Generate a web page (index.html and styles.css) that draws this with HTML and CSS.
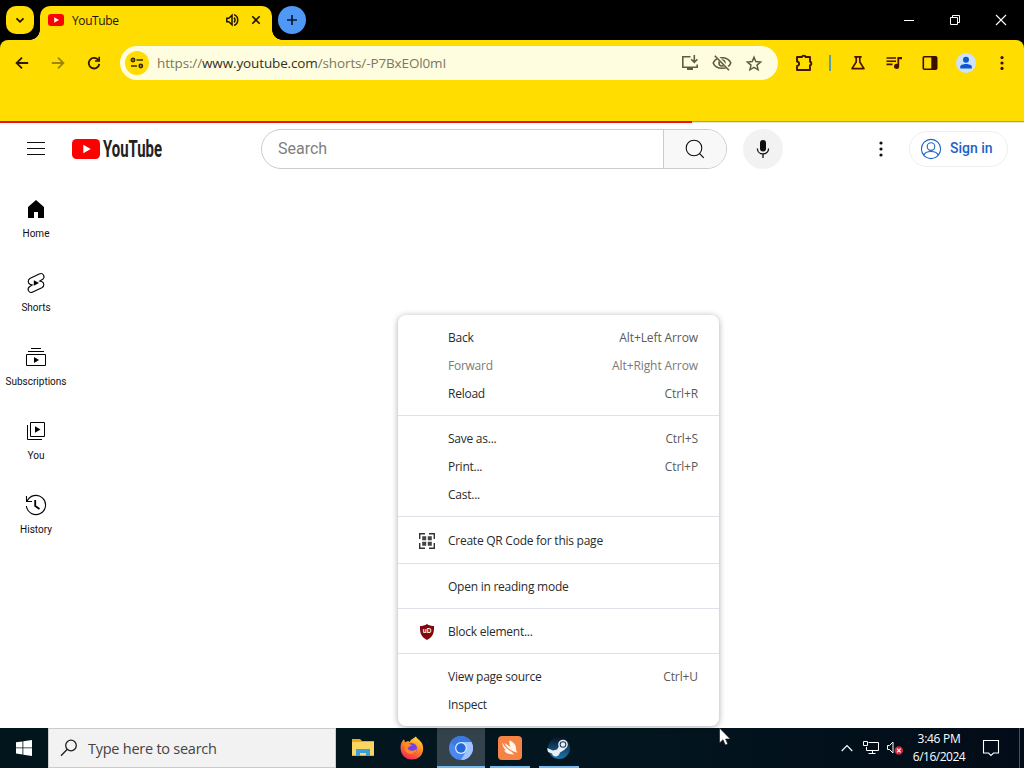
FILE: index.html
```
<!DOCTYPE html>
<html lang="en">
<head>
    <meta charset="UTF-8">
    <meta name="viewport" content="width=device-width, initial-scale=1.0">
    <title>YouTube</title>
    <link rel="stylesheet" href="styles.css">
</head>
<body>
    <div class="screen">
        <!-- Tab strip -->
        <div class="tab-strip">
            <button class="tab-search">
                <svg width="16" height="16" viewBox="0 0 16 16"><path d="M4.5 6.3L8 9.8l3.5-3.5" fill="none" stroke="#1c1500" stroke-width="1.8"/></svg>
            </button>
            <div class="tab">
                <svg width="16" height="12" viewBox="0 0 16 12"><rect width="16" height="12" rx="3" fill="#f00"/><path d="M6.2 3.2v5.6L11 6z" fill="#fff"/></svg>
                <span class="tab-title">YouTube</span>
                <svg class="tab-sound" width="14" height="14" viewBox="0 0 14 14"><path d="M1.8 5.2h2L7 2.3v9.4L3.8 8.8h-2z" fill="none" stroke="#1c1500" stroke-width="1.5"/><path d="M9 4.6c1.4 1 1.4 3.8 0 4.8M9 1.6c5 1.8 5 9 0 10.8" fill="none" stroke="#1c1500" stroke-width="1.5"/></svg>
                <svg class="tab-close" width="10" height="10" viewBox="0 0 10 10"><path d="M1.3 1.3l7.4 7.4M8.7 1.3L1.3 8.7" stroke="#1c1500" stroke-width="1.6"/></svg>
            </div>
            <button class="new-tab">
                <svg width="12" height="12" viewBox="0 0 12 12"><path d="M6 1v10M1 6h10" stroke="#06182f" stroke-width="1.7"/></svg>
            </button>
            <div class="window-controls">
                <span><svg width="12" height="12" viewBox="0 0 12 12"><path d="M1 6.5h10" stroke="#fff"/></svg></span>
                <span><svg width="12" height="12" viewBox="0 0 12 12"><path d="M1.5 3.5h7v7h-7zM3.5 3.5v-2h7v7h-2" fill="none" stroke="#fff"/></svg></span>
                <span><svg width="12" height="12" viewBox="0 0 12 12"><path d="M1 1l10 10M11 1L1 11" stroke="#fff" stroke-width="1.1"/></svg></span>
            </div>
        </div>

        <!-- Toolbar -->
        <div class="toolbar-wrap">
            <div class="toolbar">
                <div class="tool"><svg width="14" height="14" viewBox="0 0 14 14"><path d="M13.2 7H2M7 1.6L1.6 7 7 12.4" fill="none" stroke="#2b1a00" stroke-width="1.8"/></svg></div>
                <div class="tool disabled"><svg width="14" height="14" viewBox="0 0 14 14"><path d="M.8 7H12M7 1.6L12.4 7 7 12.4" fill="none" stroke="#2b1a00" stroke-width="1.8"/></svg></div>
                <div class="tool"><svg width="14" height="14" viewBox="0 0 14 14"><path d="M11.7 4.6A5.3 5.3 0 1 0 12.3 8" fill="none" stroke="#2b1a00" stroke-width="1.8"/><path d="M13 .8v5H8V4.2h3.4V.8z" fill="#2b1a00"/></svg></div>
                <div class="omnibox">
                    <span class="site-info">
                        <svg width="14" height="12" viewBox="0 0 14 12"><g fill="none" stroke="#3b2800" stroke-width="1.7"><circle cx="3" cy="3" r="1.6"/><path d="M6.5 3H13M1 9h6"/><circle cx="10.8" cy="9" r="1.6"/></g></svg>
                    </span>
                    <span class="url">https://<b>www.youtube.com</b>/shorts/-P7BxEOl0mI</span>
                    <div class="page-actions">
                        <svg width="18" height="16" viewBox="0 0 18 16"><path d="M9.5 1.8H1.8v10.4h14.4V9.5M13.3 0v7M10.2 4.2l3.1 3.1 3.1-3.1" fill="none" stroke="#5f5c45" stroke-width="1.6"/><path d="M6 12.5h6V15H6z" fill="#5f5c45"/></svg>
                        <svg width="20" height="16" viewBox="0 0 20 16"><g fill="none" stroke="#5f5c45" stroke-width="1.6"><path d="M1.2 8C4 1 16 1 18.8 8 16 15 4 15 1.2 8z"/><circle cx="10" cy="8" r="3"/></g><path d="M4.2.8l13 14" stroke="#fffde0" stroke-width="3"/><path d="M2.8.8L17 15.2" stroke="#5f5c45" stroke-width="1.6"/></svg>
                        <svg width="18" height="17" viewBox="0 0 18 17"><path d="M9 2.2l1.8 4.4 4.8.4-3.6 3.1 1.1 4.7L9 12.3l-4.1 2.5L6 10.1 2.4 7l4.8-.4z" fill="none" stroke="#5f5c45" stroke-width="1.5"/></svg>
                    </div>
                </div>
                <div class="tools-right">
                    <div class="tool extensions"><svg width="18" height="18" viewBox="0 0 18 18"><path d="M2 3h5c0-1.8 3.5-1.8 3.5 0H15v4.8c1.7 0 1.7 3.4 0 3.4V16H2v-4c2.8-.3 2.8-4.2 0-4.5z" fill="none" stroke="#3e1600" stroke-width="1.9" stroke-linejoin="round"/></svg></div>
                    <span class="divider"></span>
                    <div class="tool"><svg width="16" height="16" viewBox="0 0 16 16"><path d="M4.3 1.8h7.4M6.2 2v5L2 13.6h12L9.8 7V2" fill="none" stroke="#4a1500" stroke-width="1.7" stroke-linejoin="round"/></svg></div>
                    <div class="tool"><svg width="16" height="14" viewBox="0 0 16 14"><path d="M.5 2h9.5M.5 5.2h9.5M.5 8.4h6" stroke="#4a1500" stroke-width="1.6"/><path d="M11.4 1H16v2.2h-2.8v7.2a2.6 2.6 0 1 1-1.8-2.5z" fill="#4a1500"/></svg></div>
                    <div class="tool"><svg width="16" height="16" viewBox="0 0 16 16"><rect x="1.3" y="1.8" width="13.4" height="12.4" rx="1" fill="none" stroke="#3a1000" stroke-width="1.6"/><path d="M9.3 2h5.4v12H9.3z" fill="#3a1000"/></svg></div>
                    <div class="tool"><svg width="20" height="20" viewBox="0 0 20 20"><circle cx="10" cy="10" r="10" fill="#cfe1fa"/><circle cx="10" cy="6.8" r="3" fill="#0b57d0"/><path d="M4.2 15.4v-1.6c0-3.8 11.6-3.8 11.6 0v1.6z" fill="#0b57d0"/></svg></div>
                    <div class="tool"><svg width="4" height="16" viewBox="0 0 4 16"><g fill="#3a1000"><circle cx="2" cy="2.6" r="1.6"/><circle cx="2" cy="8" r="1.6"/><circle cx="2" cy="13.4" r="1.6"/></g></svg></div>
                </div>
            </div>
        </div>
        <div class="bookmarks-bar"></div>
        <div class="progress"><div class="progress-value"></div></div>

        <!-- Page -->
        <div class="page">
            <header class="masthead">
                <div class="guide-button"><svg width="20" height="16" viewBox="0 0 20 16"><path d="M1 1.5h18M1 7.5h18M1 13.5h18" stroke="#0f0f0f"/></svg></div>
                <a class="logo">
                    <svg width="28" height="20" viewBox="0 0 28 20"><rect width="28" height="20" rx="4.5" fill="#f00"/><path d="M11.3 5.8v8.4l7.4-4.2z" fill="#fff"/></svg>
                    <svg class="logo-text" width="62" height="32" viewBox="0 0 62 32"><text class="wordmark" x="1" y="24" textLength="59" lengthAdjust="spacingAndGlyphs">YouTube</text></svg>
                </a>
                <div class="search">
                    <div class="search-input">Search</div>
                    <button class="search-button"><svg width="20" height="20" viewBox="0 0 20 20"><circle cx="9" cy="9" r="7.8" fill="none" stroke="#0f0f0f" stroke-width="1.1"/><path d="M14.3 14.3l4.5 4.5" stroke="#0f0f0f" stroke-width="1.2"/></svg></button>
                </div>
                <button class="voice"><svg width="14" height="20" viewBox="0 0 14 20"><rect x="4" y="1" width="6" height="11.5" rx="3" fill="#0f0f0f"/><path d="M1.4 9.4c0 7.4 11.2 7.4 11.2 0M7 15v4" fill="none" stroke="#0f0f0f" stroke-width="1.3"/></svg></button>
                <div class="settings"><svg width="4" height="16" viewBox="0 0 4 16"><g fill="#0f0f0f"><circle cx="2" cy="2" r="1.6"/><circle cx="2" cy="8" r="1.6"/><circle cx="2" cy="14" r="1.6"/></g></svg></div>
                <a class="sign-in">
                    <svg width="22" height="22" viewBox="0 0 22 22"><g fill="none" stroke="#1b62c9" stroke-width="1.1"><circle cx="11" cy="11" r="9.6"/><circle cx="11" cy="8.6" r="3.8"/><path d="M3.8 17.2c1.8-5 12.6-5 14.4 0"/></g></svg>
                    <span>Sign in</span>
                </a>
            </header>
            <nav class="mini-guide">
                <a class="guide-item">
                    <svg width="24" height="24" viewBox="0 0 24 24"><path d="M4 21V10.1L12 3l8 7.1V21h-6v-6h-4v6z" fill="#030303"/></svg>
                    <span>Home</span>
                </a>
                <a class="guide-item">
                    <svg width="24" height="24" viewBox="0 0 24 24"><path d="M9.8 9.2v5.6l5.2-2.8z" fill="#030303"/><path d="M6.3 7.2L15.2 2.9c1.8-.8 3.6-.2 4.4 1.3.8 1.700.2 3.400-1.300 4.300l-2.600 1.500 1.800.6c3 1 3.200 4.700.3 6.200l-9 4.300c-1.700.8-3.500.1-4.300-1.400-.8-1.600-.2-3.300 1.300-4.200l2.500-1.500-1.800-.6c-3-1-3.100-4.800-.2-6.200z" fill="none" stroke="#030303" stroke-width="1.1"/></svg>
                    <span>Shorts</span>
                </a>
                <a class="guide-item">
                    <svg width="24" height="24" viewBox="0 0 24 24"><path d="M2.5 9.5h19v11h-19zM4 6.5h16M7 3.5h10" fill="none" stroke="#030303"/><path d="M10 12v6l5-3z" fill="#030303"/></svg>
                    <span>Subscriptions</span>
                </a>
                <a class="guide-item">
                    <svg width="24" height="24" viewBox="0 0 24 24"><path d="M6.5 3.5h14v14h-14zM3.5 6v14.5H18" fill="none" stroke="#030303"/><path d="M11 7.2v6.6l5.5-3.3z" fill="#030303"/></svg>
                    <span>You</span>
                </a>
                <a class="guide-item">
                    <svg width="24" height="24" viewBox="0 0 24 24"><path d="M2.5 3v5.5H8M3 8.5a9.6 9.6 0 1 1-.6 4.5" fill="none" stroke="#030303" stroke-width="1.1"/><path d="M11.2 7v6l4.3 3" fill="none" stroke="#030303" stroke-width="1.8"/></svg>
                    <span>History</span>
                </a>
            </nav>
        </div>

        <!-- Context menu -->
        <div class="context-menu">
            <div class="menu-group">
                <div class="menu-item"><span>Back</span><kbd>Alt+Left Arrow</kbd></div>
                <div class="menu-item disabled"><span>Forward</span><kbd>Alt+Right Arrow</kbd></div>
                <div class="menu-item"><span>Reload</span><kbd>Ctrl+R</kbd></div>
            </div>
            <div class="menu-group">
                <div class="menu-item"><span>Save as...</span><kbd>Ctrl+S</kbd></div>
                <div class="menu-item"><span>Print...</span><kbd>Ctrl+P</kbd></div>
                <div class="menu-item"><span>Cast...</span></div>
            </div>
            <div class="menu-group">
                <div class="menu-item tall">
                    <i><svg width="18" height="18" viewBox="0 0 18 18"><path d="M1.7 7V1.7H7M11 1.7h5.3V7M16.3 11v5.3H11M7 16.3H1.7V11" fill="none" stroke="#333" stroke-width="1.4"/><path d="M4.2 4.2h4v4h-4zM9.8 4.2h4v4h-4zM4.2 9.8h4v4h-4zM9.8 9.8h4v4h-4z" fill="#444"/></svg></i>
                    <span>Create QR Code for this page</span>
                </div>
            </div>
            <div class="menu-group">
                <div class="menu-item"><span>Open in reading mode</span></div>
            </div>
            <div class="menu-group">
                <div class="menu-item">
                    <i><svg width="16" height="16" viewBox="0 0 16 16"><path d="M8 0c2 1.5 4.5 2 7 2 .2 7-1 11-7 14C2 13 .8 9 1 2c2.5 0 5-.5 7-2z" fill="#800610"/><text class="shield-text" x="8" y="9.4">uD</text></svg></i>
                    <span>Block element...</span>
                </div>
            </div>
            <div class="menu-group">
                <div class="menu-item"><span>View page source</span><kbd>Ctrl+U</kbd></div>
                <div class="menu-item"><span>Inspect</span></div>
            </div>
        </div>

        <!-- Taskbar -->
        <div class="taskbar">
            <div class="start"><svg width="16" height="16" viewBox="0 0 16 16"><path d="M0 2.3l6.5-.9v6.100H0zM7.300 1.300L16 0v7.500H7.300zM0 8.300h6.500v6.200L0 13.600zM7.300 8.300H16V16l-8.700-1.300z" fill="#fff"/></svg></div>
            <div class="task-search">
                <svg width="18" height="18" viewBox="0 0 18 18"><circle cx="11" cy="6.5" r="5.3" fill="none" stroke="#222" stroke-width="1.3"/><path d="M7.3 10.3L1 16.8" stroke="#222" stroke-width="1.4"/></svg>
                <span>Type here to search</span>
            </div>
            <div class="task-apps">
                <div class="app">
                    <svg width="24" height="24" viewBox="0 0 24 24"><path d="M1 3h8l2 2h12v15H1z" fill="#e8a91c"/><path d="M1 6h22v13H1z" fill="#fcd462"/><path d="M5 20v-7h14v7h-4v-3H9v3z" fill="#3aa0dc"/></svg>
                </div>
                <div class="app">
                    <svg width="24" height="24" viewBox="0 0 24 24">
                        <defs><linearGradient id="fox" x1=".8" y1="0" x2=".3" y2="1"><stop offset="0" stop-color="#ffe23d"/><stop offset=".45" stop-color="#ff8b1f"/><stop offset="1" stop-color="#f3255c"/></linearGradient></defs>
                        <path d="M16 .5c1 2.500 5 4 6.500 8C25 17 20 23.500 12 23.500S-.5 17 .8 9C1.200 6.500 2.300 5 4 3.200l1 3 3-1.200 2 1c0-2.500 3-3 6-5.500z" fill="url(#fox)"/><circle cx="11.5" cy="12.5" r="5.6" fill="#7542e5"/><path d="M4 8c3-2 5-.5 8 1.500-2 .5-3 1.500-4.500 2.500 1 3 5 4 9.500 1-1 6-9.500 7-12 1z" fill="#ff8a24"/>
                    </svg>
                </div>
                <div class="app running active">
                    <svg width="24" height="24" viewBox="0 0 24 24"><circle cx="12" cy="12" r="12" fill="#4a87ee"/><path d="M12 6h10.400A12 12 0 0 1 12 24l5.200-9z" fill="#9ec5ff"/><path d="M1.600 6A12 12 0 0 1 22.400 6H12a6 6 0 0 0-5.700 4.200z" fill="#3b78e0"/><circle cx="12" cy="12" r="6" fill="#d8e8ff"/><circle cx="12" cy="12" r="4.7" fill="#2469d8"/></svg>
                </div>
                <div class="app running">
                    <svg width="24" height="24" viewBox="0 0 24 24"><rect width="24" height="24" rx="4" fill="#f58345"/><path d="M4.500 6.500c1.500 4 5 7 9.500 9.500l2 2.500c-4.500 0-8-1-10-4l2-.3c-2.500-2-3.800-5-3.500-7.700z" fill="#fff5ec"/><path d="M11.500 4.500c4.500 1.500 7 5 6.500 9.500l1.500 2.500-3.500-.8c-5-2.200-8-4.700-9.500-8.700 2 1 4 2.500 6 4-1-2-1.500-4-1-6.500z" fill="#fff5ec"/></svg>
                </div>
                <div class="app running">
                    <svg width="24" height="24" viewBox="0 0 24 24">
                        <defs><linearGradient id="steam" x1="0" y1="0" x2="0" y2="1"><stop offset="0" stop-color="#071428"/><stop offset="1" stop-color="#1b76ac"/></linearGradient></defs>
                        <circle cx="12" cy="12" r="11" fill="url(#steam)"/><path d="M0 12l6 2.500 4-1 3-5 5 5-5 3c-1 5-7 5-8 1L1 16z" fill="#e8eef4"/><circle cx="16" cy="8.5" r="4.8" fill="#e8eef4"/><circle cx="16" cy="8.5" r="3.3" fill="#173653"/><circle cx="16" cy="8.5" r="2.3" fill="#e8eef4"/>
                    </svg>
                </div>
            </div>
            <div class="tray">
                <svg class="tray-up" width="12" height="8" viewBox="0 0 12 8"><path d="M.7 7L6 1.700 11.300 7" fill="none" stroke="#fff" stroke-width="1.2"/></svg>
                <svg class="tray-net" width="16" height="14" viewBox="0 0 16 14"><path d="M5.500 1.500h10v8H3.500V6M.5.500h4v4h-4zM9.500 9.500v3M5.500 12.500h7" fill="none" stroke="#fff"/></svg>
                <svg class="tray-sound" width="16" height="14" viewBox="0 0 16 14"><path d="M.5 4.500h2L6 1v11L2.500 8.500h-2z" fill="none" stroke="#fff"/><circle cx="11.8" cy="9.5" r="4.2" fill="#d5263a"/><path d="M10 7.700l3.600 3.600M13.600 7.700L10 11.300" stroke="#fff" stroke-width="1.2"/></svg>
                <div class="clock"><span class="time">3:46 PM</span><span>6/16/2024</span></div>
                <svg class="tray-note" width="18" height="18" viewBox="0 0 18 18"><path d="M1.500 1.500h15v12.500h-5L9 16.500 6.500 14h-5z" fill="none" stroke="#fff" stroke-width="1.1"/></svg>
                <span class="show-desktop"></span>
            </div>
        </div>

        <svg class="cursor" width="12" height="19" viewBox="0 0 12 19"><path d="M.5 1v15l3.500-3.300L6.300 18l2.500-1.100L6.600 12h4.700z" fill="#fff" stroke="#111" stroke-width=".6"/></svg>
    </div>
</body>
</html>
```
FILE: styles.css
```
* {
    box-sizing: border-box;
}
body {
    margin: 0;
    font-family: "Open Sans", "Noto Sans", sans-serif;
    background-color: #fff;
}
button {
    border: none;
    padding: 0;
    font: inherit;
}
svg {
    display: block;
    flex-shrink: 0;
}
.screen {
    position: relative;
    display: flex;
    flex-direction: column;
    width: 1024px;
    height: 768px;
    overflow: hidden;
}

/* Tab strip */
.tab-strip {
    display: flex;
    height: 40px;
    padding: 6px 0 0 6px;
    background-color: #000;
}
.tab-search {
    display: flex;
    align-items: center;
    justify-content: center;
    width: 28px;
    height: 28px;
    margin-right: 6px;
    border-radius: 10px;
    background-color: #ffdd00;
}
.tab {
    position: relative;
    display: flex;
    align-items: center;
    width: 232px;
    height: 34px;
    padding: 0 11px 6px 8px;
    border-radius: 10px 10px 0 0;
    background-color: #ffdd00;
}
.tab::before,
.tab::after {
    content: "";
    position: absolute;
    bottom: 0;
    width: 10px;
    height: 10px;
}
.tab::before {
    left: -10px;
    background: radial-gradient(circle at 0 0, transparent 9.5px, #ffdd00 10px);
}
.tab::after {
    right: -10px;
    background: radial-gradient(circle at 100% 0, transparent 9.5px, #ffdd00 10px);
}
.tab-title {
    margin-left: 8px;
    padding-top: 2px;
    font-size: 12px;
    line-height: 16px;
    letter-spacing: -0.4px;
    color: #1c1500;
}
.tab-sound {
    margin-left: auto;
}
.tab-close {
    margin-left: 12px;
}
.new-tab {
    display: flex;
    align-items: center;
    justify-content: center;
    width: 28px;
    height: 28px;
    margin-left: 6px;
    border-radius: 50%;
    background-color: #4f98f5;
}
.window-controls {
    display: flex;
    margin: -6px 0 0 auto;
}
.window-controls span {
    display: flex;
    align-items: center;
    justify-content: center;
    width: 46px;
    height: 40px;
}

/* Toolbar */
.toolbar-wrap {
    background-color: #000;
}
.toolbar {
    display: flex;
    align-items: center;
    height: 46px;
    padding-left: 4px;
    border-radius: 8px 8px 0 0;
    background-color: #ffdd00;
}
.tool {
    display: flex;
    align-items: center;
    justify-content: center;
    width: 36px;
    height: 34px;
}
.tool.disabled {
    opacity: 0.45;
}
.omnibox {
    display: flex;
    align-items: center;
    width: 658px;
    height: 34px;
    margin-left: 8px;
    padding: 0 15px 0 5px;
    border-radius: 17px;
    background-color: #fffde0;
}
.site-info {
    display: flex;
    align-items: center;
    justify-content: center;
    width: 24px;
    height: 24px;
    border-radius: 50%;
    background-color: #ffdd00;
}
.url {
    margin-left: 8px;
    font-size: 13.5px;
    line-height: 20px;
    letter-spacing: -0.13px;
    color: #7a7860;
}
.url b {
    font-weight: normal;
    color: #33301c;
}
.page-actions {
    display: flex;
    align-items: center;
    gap: 13px;
    margin-left: auto;
}
.tools-right {
    display: flex;
    align-items: center;
    margin-left: auto;
    padding-right: 4px;
}
.extensions {
    margin-right: 7px;
}
.divider {
    width: 2px;
    height: 16px;
    margin-right: 9px;
    background-color: #5b9fae;
}
.bookmarks-bar {
    height: 35px;
    background-color: #ffdd00;
}
.progress {
    height: 2px;
    background: linear-gradient(#b5a548 50%, #e6e3d8 50%);
}
.progress-value {
    width: 692px;
    height: 2px;
    background-color: #e3170a;
}

/* Page */
.page {
    height: 605px;
    background-color: #fff;
}
.masthead {
    display: flex;
    align-items: center;
    height: 52px;
    padding: 0 16px 0 26px;
}
.logo {
    display: flex;
    align-items: center;
    gap: 2px;
    margin-left: 26px;
}
.logo-text {
    overflow: visible;
}
.wordmark {
    font-family: "Liberation Sans Narrow", Roboto, sans-serif;
    font-size: 23px;
    font-weight: bold;
    fill: #212121;
}
.search {
    display: flex;
    width: 466px;
    height: 40px;
    margin-left: 97px;
    border: 1px solid #ccc;
    border-radius: 20px;
    overflow: hidden;
}
.search-input {
    flex: 1;
    padding-left: 16px;
    font-family: Roboto, sans-serif;
    font-size: 16px;
    line-height: 38px;
    color: #808080;
}
.search-button {
    display: flex;
    align-items: center;
    justify-content: center;
    width: 63px;
    border-left: 1px solid #ccc;
    background-color: #f8f8f8;
}
.voice {
    display: flex;
    align-items: center;
    justify-content: center;
    width: 40px;
    height: 40px;
    margin-left: 16px;
    border-radius: 50%;
    background-color: #f2f2f2;
}
.settings {
    margin-left: auto;
}
.sign-in {
    display: flex;
    align-items: center;
    gap: 8px;
    width: 99px;
    height: 36px;
    margin-left: 26px;
    padding-left: 10px;
    border: 1px solid #eee;
    border-radius: 18px;
    font-family: Roboto, sans-serif;
    font-size: 14px;
    font-weight: 500;
    color: #1b62c9;
}
.sign-in span {
    padding-bottom: 2px;
}
.mini-guide {
    width: 72px;
    padding-top: 6px;
}
.guide-item {
    display: flex;
    flex-direction: column;
    align-items: center;
    gap: 6px;
    height: 74px;
    padding-top: 16px;
    font-family: Roboto, sans-serif;
    font-size: 10px;
    line-height: 14px;
    color: #0f0f0f;
}

/* Context menu */
.context-menu {
    position: absolute;
    left: 398px;
    top: 315px;
    width: 321px;
    border-radius: 8px;
    background-color: #fff;
    box-shadow: 0 1px 6px rgba(0,0,0,0.34);
    font-size: 12px;
    letter-spacing: -0.25px;
    color: #2b2b2b;
}
.menu-group {
    padding: 9px 0 7px;
}
.menu-group + .menu-group {
    border-top: 1px solid #dfe1ea;
}
.menu-item {
    display: flex;
    align-items: center;
    height: 28px;
    padding: 0 21px 1px 50px;
}
.menu-item.tall {
    height: 30px;
}
.menu-item.disabled {
    color: #7a7a7a;
}
.menu-item i {
    display: flex;
    justify-content: center;
    width: 18px;
    margin: 0 12px 0 -30px;
    font-style: normal;
}
.menu-item kbd {
    margin-left: auto;
    font-family: inherit;
    font-size: 12px;
    letter-spacing: -0.1px;
    color: #5a5a5a;
}
.menu-item.disabled kbd {
    color: #7a7a7a;
}
.shield-text {
    font-family: "Liberation Sans", Arial, sans-serif;
    font-size: 6.5px;
    font-weight: bold;
    letter-spacing: 0;
    text-anchor: middle;
    fill: #fff;
}

/* Taskbar */
.taskbar {
    display: flex;
    height: 40px;
    background: linear-gradient(90deg, #02141c, #03161f 60%, #020c18);
}
.start {
    display: flex;
    align-items: center;
    justify-content: center;
    width: 48px;
}
.task-search {
    display: flex;
    align-items: center;
    width: 288px;
    padding-left: 11px;
    border: 1px solid #c8cccd;
    background-color: #f2f2f2;
    font-size: 14.5px;
    letter-spacing: -0.25px;
    color: #444;
}
.task-search span {
    margin-left: 10px;
}
.task-apps {
    display: flex;
    gap: 1px;
    padding-left: 3px;
}
.app {
    display: flex;
    align-items: center;
    justify-content: center;
    width: 48px;
    height: 40px;
}
.app.running {
    background: linear-gradient(#76b9ed, #76b9ed) center bottom / 40px 2px no-repeat;
}
.app.active {
    background-color: #34434b;
    background-size: 48px 2px;
}
.tray {
    display: flex;
    align-items: center;
    margin-left: auto;
    color: #fff;
}
.tray-net {
    margin-left: 10px;
}
.tray-sound {
    margin-left: 8px;
}
.clock {
    display: flex;
    flex-direction: column;
    width: 72px;
    font-size: 12px;
    line-height: 18px;
    letter-spacing: -0.5px;
    text-align: center;
}
.clock .time {
    letter-spacing: -0.3px;
}
.tray-note {
    margin-left: 7px;
}
.show-desktop {
    width: 5px;
    height: 40px;
    margin-left: 19px;
    border-left: 1px solid #46525a;
}

.cursor {
    position: absolute;
    left: 719px;
    top: 727px;
}
```
